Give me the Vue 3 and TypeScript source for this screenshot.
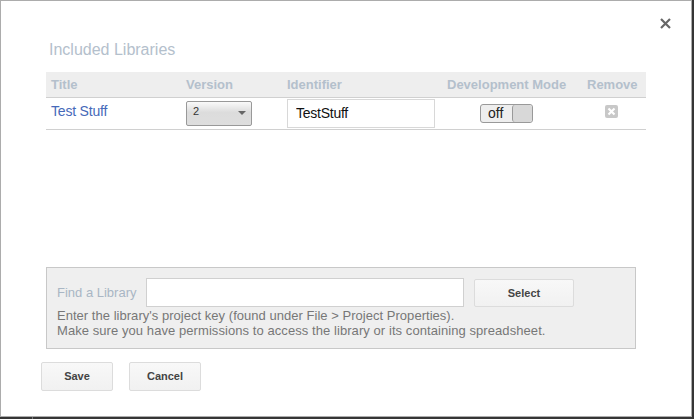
<template>
  <div class="dialog">
    <button class="close" type="button" aria-label="Close">
      <svg width="11" height="11" viewBox="0 0 11 11">
        <path d="M1 1l9 9M10 1l-9 9" stroke="#666" stroke-width="2.2" fill="none" />
      </svg>
    </button>

    <h2 class="heading">Included Libraries</h2>

    <div class="table">
      <div class="row head">
        <div class="col-title">Title</div>
        <div class="col-version">Version</div>
        <div class="col-id">Identifier</div>
        <div class="col-dev">Development Mode</div>
        <div class="col-remove">Remove</div>
      </div>
      <div v-for="lib in libraries" :key="lib.identifier" class="row body">
        <div class="col-title"><a class="lib-link">{{ lib.title }}</a></div>
        <div class="col-version">
          <div class="select">
            <span>{{ lib.version }}</span>
            <i class="caret"></i>
          </div>
        </div>
        <div class="col-id">
          <input class="id-input" :value="lib.identifier" />
        </div>
        <div class="col-dev">
          <div class="toggle">
            <span class="toggle-label">off</span>
            <span class="toggle-knob"></span>
          </div>
        </div>
        <div class="col-remove">
          <svg class="remove" width="13" height="13" viewBox="0 0 13 13">
            <rect width="13" height="13" rx="2" fill="#c8c8c8" />
            <path d="M3.5 3.5l6 6M9.5 3.5l-6 6" stroke="#fff" stroke-width="2.2" fill="none" />
          </svg>
        </div>
      </div>
    </div>

    <div class="spacer"></div>

    <div class="finder">
      <div class="finder-top">
        <label class="finder-label">Find a Library</label>
        <input class="finder-input" />
        <button class="btn btn-select" type="button">Select</button>
      </div>
      <p class="hint first">Enter the library's project key (found under File &gt; Project Properties).</p>
      <p class="hint">Make sure you have permissions to access the library or its containing spreadsheet.</p>
    </div>

    <div class="actions">
      <button class="btn" type="button">Save</button>
      <button class="btn" type="button">Cancel</button>
    </div>
  </div>
</template>

<script setup lang="ts">
interface Library {
  title: string
  version: number
  identifier: string
}

const libraries: Library[] = [{ title: 'Test Stuff', version: 2, identifier: 'TestStuff' }]
</script>

<style>
html,
body {
  margin: 0;
  height: 100%;
  background: #353535;
  overflow: hidden;
}
</style>

<style scoped>
.dialog {
  position: relative;
  box-sizing: border-box;
  width: 692px;
  height: 417px;
  padding: 0 0 0 40px;
  background: #fff;
  border: 1px solid #acacac;
  font-family: 'Liberation Sans', Arial, sans-serif;
  display: flex;
  flex-direction: column;
}

/* small tick in the dark strip under the dialog */
.dialog::after {
  content: '';
  position: absolute;
  left: 31px;
  top: 416px;
  width: 1px;
  height: 2px;
  background: #777;
}

.close {
  position: absolute;
  top: 17px;
  right: 20px;
  width: 11px;
  height: 11px;
  padding: 0;
  border: 0;
  background: none;
  display: flex;
}

.heading {
  margin: 39px 0 0 8px;
  font-size: 16px;
  line-height: 20px;
  font-weight: normal;
  color: #b4c0cc;
}

.table {
  width: 600px;
  margin: 12px 0 0 5px;
  border-bottom: 1px solid #d0d0d0;
}

.row {
  display: flex;
  align-items: center;
}

.head {
  box-sizing: border-box;
  height: 26px;
  padding-bottom: 1px;
  background: #eee;
  border-bottom: 1px solid #d0d0d0;
  font-size: 13px;
  font-weight: bold;
  color: #b4c0cc;
}

.body {
  height: 31px;
  font-size: 14px;
}

.col-title {
  width: 140px;
  padding-left: 5px;
  box-sizing: border-box;
}

.body .col-title {
  padding-bottom: 5px;
}

.col-version {
  width: 101px;
}

.col-id {
  width: 160px;
}

.col-dev {
  width: 140px;
}

.col-remove {
  width: 59px;
}

.lib-link {
  color: #4669b9;
  letter-spacing: -0.2px;
}

.select {
  box-sizing: border-box;
  width: 66px;
  height: 25px;
  padding: 0 5px 5px 6px;
  border: 1px solid #999;
  border-radius: 2px;
  background: linear-gradient(#fafafa, #dcdcdc 45%, #dedede);
  display: flex;
  align-items: center;
  justify-content: space-between;
  font-size: 11px;
  color: #333;
}

.caret {
  border: 4px solid transparent;
  border-top-color: #666;
  border-bottom-width: 0;
  margin-top: 3px;
}

.id-input {
  box-sizing: border-box;
  display: block;
  width: 148px;
  height: 29px;
  padding: 0 8px 2px;
  border: 1px solid #d8d8d8;
  background: #fff;
  font: 14px 'Liberation Sans', Arial, sans-serif;
  letter-spacing: -0.25px;
  color: #111;
  outline: none;
}

.toggle {
  box-sizing: border-box;
  width: 53px;
  height: 19px;
  margin-left: 33px;
  border: 1px solid #999;
  border-radius: 3px;
  background: #eee;
  display: flex;
}

.toggle-label {
  flex: 1;
  padding-left: 7px;
  font-size: 14px;
  line-height: 17px;
  color: #222;
}

.toggle-knob {
  width: 19px;
  border-left: 1px solid #999;
  border-radius: 3px;
  background: #d8d8d8;
}

.remove {
  display: block;
  margin: 0 0 4px 18px;
}

.spacer {
  flex: 1;
}

.finder {
  box-sizing: border-box;
  width: 590px;
  height: 82px;
  margin-left: 5px;
  padding: 10px 10px 0;
  background: #efefef;
  border: 1px solid #c8c8c8;
}

.finder-top {
  display: flex;
  align-items: center;
  height: 29px;
  margin-bottom: 1px;
}

.finder-label {
  width: 89px;
  font-size: 13px;
  color: #a9b6c4;
}

.finder-input {
  box-sizing: border-box;
  width: 318px;
  height: 29px;
  border: 1px solid #d0d0d0;
  background: #fff;
  outline: none;
}

.hint {
  margin: 0;
  font-size: 13px;
  line-height: 15px;
  letter-spacing: 0.07px;
  color: #777;
}

.hint.first {
  letter-spacing: 0.03px;
}

.actions {
  display: flex;
  gap: 16px;
  margin: 13px 0 25px;
}

.btn {
  box-sizing: border-box;
  width: 72px;
  height: 29px;
  padding: 0;
  border: 1px solid #dcdcdc;
  border-radius: 2px;
  background: linear-gradient(#f8f8f8, #f1f1f1);
  font: bold 11px 'Liberation Sans', Arial, sans-serif;
  color: #444;
}

.actions .btn {
  padding-bottom: 2px;
}

.btn-select {
  width: 100px;
  margin: 1px 0 0 10px;
  height: 28px;
}
</style>
